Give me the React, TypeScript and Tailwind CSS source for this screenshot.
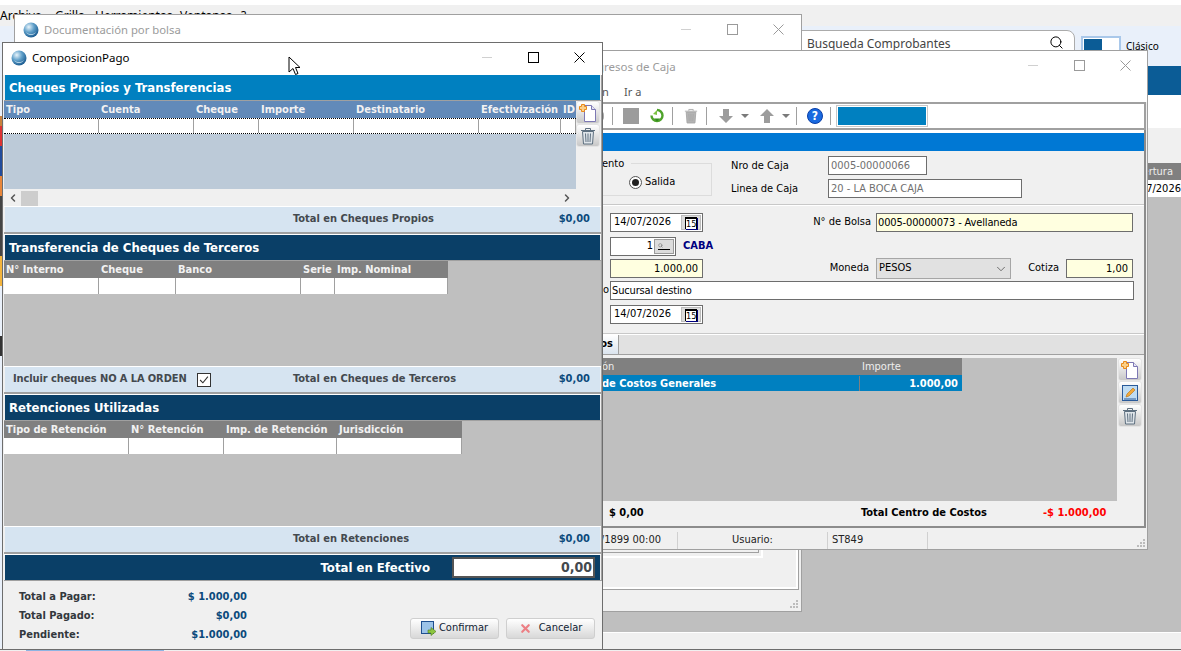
import { Search, ChevronDown, X, ChevronLeft, ChevronRight } from 'lucide-react';

type Col = { label: string; width: number };

const chequesCols: Col[] = [
  { label: 'Tipo', width: 95 },
  { label: 'Cuenta', width: 95 },
  { label: 'Cheque', width: 65 },
  { label: 'Importe', width: 95 },
  { label: 'Destinatario', width: 125 },
  { label: 'Efectivización', width: 82 },
  { label: 'ID', width: 15 },
];

const terceroCols: Col[] = [
  { label: 'N° Interno', width: 95 },
  { label: 'Cheque', width: 77 },
  { label: 'Banco', width: 125 },
  { label: 'Serie', width: 34 },
  { label: 'Imp. Nominal', width: 113 },
];

const retencionCols: Col[] = [
  { label: 'Tipo de Retención', width: 125 },
  { label: 'N° Retención', width: 95 },
  { label: 'Imp. de Retención', width: 113 },
  { label: 'Jurisdicción', width: 125 },
];

function Globe({ id }: { id: string }) {
  return (
    <svg width="16" height="16" viewBox="0 0 16 16" className="shrink-0">
      <defs>
        <radialGradient id={id} cx="0.35" cy="0.3" r="0.8">
          <stop offset="0" stopColor="#e8f4fb" />
          <stop offset="0.45" stopColor="#5f9fc9" />
          <stop offset="1" stopColor="#0f4f86" />
        </radialGradient>
      </defs>
      <circle cx="8" cy="8" r="7.5" fill={`url(#${id})`} />
      <path d="M3 10c3 3 7 3 10 0-2 4-8 4-10 0z" fill="#cfe6f3" />
    </svg>
  );
}

function WinButtons({ faint }: { faint?: boolean }) {
  const stroke = faint ? '#9a9a9a' : '#000000';
  return (
    <div className="flex items-center">
      <div className="flex w-[46px] justify-center">
        <div className="h-px w-[10px] bg-[#d0d0d0]" />
      </div>
      <div className="flex w-[46px] justify-center">
        <svg width="11" height="11" viewBox="0 0 11 11">
          <rect x="0.5" y="0.5" width="10" height="10" fill="none" stroke={stroke} />
        </svg>
      </div>
      <div className="flex w-[46px] justify-center">
        <svg width="11" height="11" viewBox="0 0 11 11">
          <path d="M0.5 0.5l10 10M10.5 0.5l-10 10" stroke={stroke} fill="none" />
        </svg>
      </div>
    </div>
  );
}

function NewDocIcon() {
  return (
    <svg width="20" height="20" viewBox="0 0 20 20">
      <path d="M6.500 2.500h7l4 4v12h-11z" fill="#fff" stroke="#7d78b4" />
      <path d="M13.500 2.500v4h4" fill="#e6e6f4" stroke="#7d78b4" />
      <path d="M3.500 1.500h3v2h2v3h-2v2h-3v-2h-2v-3h2z" fill="#fbd08a" stroke="#ea8a1a" />
    </svg>
  );
}

function TrashIcon({ color = '#5d6f7f', width = 16 }: { color?: string; width?: number }) {
  return (
    <svg width={width} height="18" viewBox="0 0 16 18">
      <path d="M2.500 4.500h11l-1 12.500h-9z" fill={color === '#5d6f7f' ? '#dfe5ea' : '#b4b4b4'} stroke={color} />
      <path d="M1 3.500h14M5.500 3V1.500h5V3" fill="none" stroke={color} />
      <path d="M5.500 6.500l.5 8.500M8 6.500v8.500M10.500 6.500l-.5 8.500" stroke={color} />
    </svg>
  );
}

function EditIcon() {
  return (
    <svg width="16" height="16" viewBox="0 0 16 16">
      <rect x="0.500" y="0.500" width="15" height="15" fill="#bfdcf3" stroke="#2a5a9a" />
      <path d="M4 12l1-3 6-6 2 2-6 6z" fill="#f2a93b" stroke="#b86e10" strokeWidth="0.6" />
      <path d="M2 14h12" stroke="#2a5a9a" />
    </svg>
  );
}

function ToolButton({ children }: { children: React.ReactNode }) {
  return (
    <div className="flex h-[23px] w-[24px] items-center justify-center rounded-[3px] border border-[#e4e4e4] bg-linear-to-b from-white to-[#c8c8c8]">
      {children}
    </div>
  );
}

function GridTable({ cols, headerBg, rowClass, dotted }: { cols: Col[]; headerBg: string; rowClass?: string; dotted?: boolean }) {
  return (
    <div className="flex flex-col">
      <div className={`flex h-[17px] items-start pt-px ${headerBg}`}>
        {cols.map((c) => (
          <div key={c.label} style={{ width: c.width }} className="overflow-hidden whitespace-nowrap pl-[2px] font-bold leading-[16px] text-[#f2f2f2]">
            {c.label}
          </div>
        ))}
      </div>
      <div className={`flex h-[16px] bg-white ${dotted ? 'border-y border-dotted border-black' : ''} ${rowClass ?? ''}`}>
        {cols.map((c) => (
          <div key={c.label} style={{ width: c.width }} className="border-r border-[#a0a0a0]" />
        ))}
      </div>
    </div>
  );
}

function SectionBar({ title, color }: { title: string; color: string }) {
  return <div className={`mx-px flex h-[25px] items-center pl-1 text-[13px] font-bold text-white ${color}`}>{title}</div>;
}

function TotalRow({ label, value, left }: { label: string; value: string; left?: React.ReactNode }) {
  return (
    <div className="mx-px flex h-[25px] items-center bg-[#d6e4f1] font-bold text-[#44494e]">
      <div className="flex w-[288px] items-center pl-2">{left}</div>
      <span className="whitespace-nowrap">{label}</span>
      <span className="ml-auto pr-[10px] text-[#0c4a7c]">{value}</span>
    </div>
  );
}

function CalendarButton() {
  return (
    <div className="ml-auto mr-[1px] flex h-[15px] w-[20px] items-center justify-center border border-[#bcbcbc] bg-[#dcdcdc]">
      <div className="h-[12px] w-[12px] border-t-2 border-r border-l border-black bg-white text-center text-[9px] leading-[10px] text-black shadow-[1px_1px_0_#000080]">15</div>
    </div>
  );
}

function DateField() {
  return (
    <div className="flex h-[19px] w-[93px] items-center border border-[#6d6d6d] bg-white pl-[3px]">
      14/07/2026
      <CalendarButton />
    </div>
  );
}

function Sep({ className = 'mx-[8px]' }: { className?: string }) {
  return <div className={`h-[18px] w-px bg-[#a0a0a0] ${className}`} />;
}

function Grip() {
  return (
    <svg width="9" height="9" viewBox="0 0 9 9" className="shrink-0">
      <path d="M6 0h2v2H6zM3 3h2v2H3zM6 3h2v2H6zM0 6h2v2H0zM3 6h2v2H3zM6 6h2v2H6z" fill="#bcbcbc" />
    </svg>
  );
}

function Backdrop() {
  return (
    <div className="flex h-[651px] flex-col">
      <div className="h-[5px] bg-white" />
      <div className="flex h-[21px] items-center bg-[#f0f0f0] font-['Noto_Sans'] text-[12px] leading-[14px] [font-stretch:normal] text-black">
        <span className="w-[55px]">Archivo</span>
        <span className="w-[40px]">Grilla</span>
        <span className="w-[85px]">Herramientas</span>
        <span className="w-[61px]">Ventanas</span>
        <span>?</span>
      </div>
      <div className="flex h-[40px] items-start bg-[#e9f0fa] pl-[801px]">
        <div className="mt-[4px] flex h-[30px] w-[274px] items-start rounded-tr-lg border border-[#ababab] bg-white pl-[5px] pt-[4px] font-['Noto_Sans'] text-[12px] [font-stretch:normal] text-[#444]">
          <span>Busqueda Comprobantes</span>
          <Search size={15} className="ml-auto mr-[10px] text-black" strokeWidth={1.6} />
        </div>
        <div className="ml-[6px] mt-[10px] flex h-[24px] w-[40px] border-2 border-[#a9c8ea] bg-white p-px">
          <div className="h-full w-[18px] bg-[#0b5c96]" />
        </div>
        <span className="ml-[5px] mt-[13px] font-['Noto_Sans'] text-[10px] [font-stretch:normal]">Clásico</span>
      </div>
      <div className="h-[29px] bg-[#0b5c96]" />
      <div className="h-[33px] bg-white" />
      <div className="h-[35px] bg-[#f0f0f0]" />
      <div className="h-[17px] bg-[#808080] pr-[8px] text-right leading-[17px] text-[#eee]">Apertura</div>
      <div className="h-[17px] bg-white text-right leading-[17px]">14/07/2026</div>
      <div className="h-[435px] bg-[#bfbfbf]" />
      <div className="h-px bg-white" />
      <div className="h-[16px] bg-[#f0f0f0]" />
      <div className="h-px bg-[#6d6d6d]" />
      <div className="flex h-[1px] pl-[26px]">
        <div className="w-[138px] bg-[#8db4e2]" />
      </div>
    </div>
  );
}

function DocumentacionWindow() {
  return (
    <div className="absolute left-[14px] top-[14px] flex h-[598px] w-[788px] flex-col border border-[#a0a0a0] bg-white">
      <div className="flex h-[30px] shrink-0 items-center pl-[8px]">
        <Globe id="globe-doc" />
        <span className="ml-[5px] font-['Noto_Sans'] text-[11.3px] leading-[14px] [font-stretch:normal] text-[#9b9b9b]">Documentación por bolsa</span>
        <div className="ml-auto -mt-[1px]">
          <WinButtons faint />
        </div>
      </div>
      <div className="h-[6px] shrink-0" />
      <div className="relative flex-1 bg-[#f0f0f0] pb-[22px] pr-[3px]">
        <div className="h-full border-b-2 border-r-2 border-white shadow-[1px_1px_0_#a0a0a0]">
          <div className="h-[507px] w-[748px] border-b-2 border-r-2 border-white">
            <div className="h-[502px] w-[744px] border-b border-r border-[#a0a0a0]" />
          </div>
        </div>
        <div className="absolute bottom-[2px] right-[2px]">
          <Grip />
        </div>
      </div>
    </div>
  );
}

function Toolbar() {
  return (
    <div className="mx-px flex h-[28px] items-center border-2 border-double border-[#a0a0a0] bg-white pl-[76px]">
      <div className="h-[10px] w-[4px] rounded-r-full bg-[#a8a8a8]" />
      <Sep />
      <div className="ml-[2px] h-[16px] w-[16px] bg-[#9c9c9c]" />
      <div className="ml-[11px]">
        <svg width="14" height="16" viewBox="0 0 14 16">
          <path d="M7 2a5.500 5.500 0 1 1-5.500 5.500" fill="none" stroke="#4fa32b" strokeWidth="2.400" />
          <path d="M7 13.500l-3-3h6z" fill="#2f8a1c" />
          <path d="M3 6l4-4v5z" fill="#7cc242" />
        </svg>
      </div>
      <Sep />
      <div className="ml-[3px]">
        <TrashIcon color="#a6a6a6" width={14} />
      </div>
      <Sep />
      <svg width="14" height="14" viewBox="0 0 14 14" className="ml-[4px]">
        <path d="M4 0h6v7h4l-7 7-7-7h4z" fill="#9c9c9c" />
      </svg>
      <div className="ml-[8px] h-0 w-0 border-x-4 border-t-4 border-x-transparent border-t-[#7a7a7a]" />
      <svg width="14" height="14" viewBox="0 0 14 14" className="ml-[11px]">
        <path d="M4 14h6V7h4L7 0 0 7h4z" fill="#9c9c9c" />
      </svg>
      <div className="ml-[8px] h-0 w-0 border-x-4 border-t-4 border-x-transparent border-t-[#7a7a7a]" />
      <Sep className="ml-[6px] mr-[8px]" />
      <div className="ml-[2px] flex h-[16px] w-[16px] items-center justify-center rounded-full border border-[#0a3fa8] bg-[#1a6ae0] text-[12px] font-bold text-white">?</div>
      <Sep className="ml-[7px] mr-[6px]" />
      <div className="h-[20px] w-[90px] border border-white bg-[#0080c0] shadow-[0_0_0_1px_#c8c8c8]" />
    </div>
  );
}

function IngresosWindow() {
  return (
    <div className="absolute left-[520px] top-[50px] flex h-[500px] w-[628px] flex-col border border-[#a0a0a0] bg-[#f0f0f0] text-[11px]">
      <div className="flex h-[31px] items-center bg-white pl-[76px]">
        <span className="font-['Noto_Sans'] text-[11.5px] [font-stretch:normal] text-[#9b9b9b]">gresos de Caja</span>
        <div className="ml-auto -mr-px -mt-[3px]">
          <WinButtons faint />
        </div>
      </div>
      <div className="flex h-[20px] items-center bg-white pl-[81px] font-['Noto_Sans'] text-[11px] [font-stretch:normal] text-[#555]">
        <span className="w-[22px]">n</span>
        <span>Ir a</span>
      </div>
      <Toolbar />
      <div className="mr-px flex h-[398px] flex-col border-b-2 border-r-2 border-[#8c8c8c]">
        <div className="h-[3px] bg-white" />
        <div className="h-[18px] bg-[#0078d4]" />
        <div className="flex h-[53px] items-start pl-[81px]">
          <div className="relative mt-[12px] h-[33px] w-[110px] border border-l-0 border-[#dcdcdc]">
            <span className="absolute left-0 top-[-8px] bg-[#f0f0f0] pr-[7px]">ento</span>
            <div className="flex h-full items-center pl-[27px] pt-[5px]">
              <div className="flex h-[13px] w-[13px] items-center justify-center rounded-full border border-[#555] bg-white">
                <div className="h-[7px] w-[7px] rounded-full bg-[#222]" />
              </div>
              <span className="ml-[3px]">Salida</span>
            </div>
          </div>
          <div className="ml-[19px] flex flex-col gap-[4px] pt-[5px]">
            <div className="flex h-[19px] items-center">
              <span className="w-[97px] pt-[2px]">Nro de Caja</span>
              <div className="h-[19px] w-[99px] border border-[#6d6d6d] bg-white pl-[2px] leading-[17px] text-[#707070]">0005-00000066</div>
            </div>
            <div className="flex h-[19px] items-center">
              <span className="w-[97px] pt-[2px]">Linea de Caja</span>
              <div className="h-[19px] w-[194px] border border-[#6d6d6d] bg-white pl-[2px] leading-[17px] text-[#707070]">20 - LA BOCA CAJA</div>
            </div>
          </div>
        </div>
        <div className="h-[2px] border-t border-[#c8c8c8] bg-white" />
        <div className="flex flex-col pl-[89px]">
          <div className="mt-[7px] flex h-[19px] items-center">
            <DateField />
            <span className="w-[173px] pr-[5px] text-right">N° de Bolsa</span>
            <div className="h-[19px] w-[257px] border border-[#6d6d6d] bg-[#ffffe0] pl-[1px] leading-[17px] tracking-[-0.15px]">0005-00000073 - Avellaneda</div>
          </div>
          <div className="mt-[5px] flex h-[18px] items-center">
            <div className="flex h-[19px] w-[66px] items-center justify-end border border-[#6d6d6d] bg-white pr-[1px]">
              1
              <div className="ml-px flex h-[15px] w-[20px] items-center justify-center border border-[#9a9a9a] bg-[#dcdcdc]">
                <div className="h-[7px] w-[12px] border-b border-black">
                  <Search size={5} className="text-[#555]" />
                </div>
              </div>
            </div>
            <span className="ml-[7px] font-bold text-[#000080]">CABA</span>
          </div>
          <div className="mt-[4px] flex h-[19px] items-center">
            <div className="h-[19px] w-[93px] border border-[#6d6d6d] bg-[#ffffe0] pr-[4px] text-right leading-[17px]">1.000,00</div>
            <span className="w-[173px] pr-[7px] text-right">Moneda</span>
            <div className="flex h-[21px] w-[135px] items-center justify-between border border-[#a6a6a6] bg-[#e1e1e1] pl-[2px] pr-[2px]">
              PESOS
              <ChevronDown size={14} className="text-[#555]" strokeWidth={1.4} />
            </div>
            <span className="w-[55px] pr-[7px] text-right">Cotiza</span>
            <div className="h-[19px] w-[67px] border border-[#6d6d6d] bg-[#ffffe0] pr-[4px] text-right leading-[17px]">1,00</div>
          </div>
          <div className="mt-[3px] flex h-[19px] items-center">
            <span className="-ml-[7px] w-[7px]">o</span>
            <div className="h-[19px] w-[524px] border border-[#6d6d6d] bg-white pl-[1px] leading-[17px] tracking-[-0.15px]">Sucursal destino</div>
          </div>
          <div className="mt-[5px]">
            <DateField />
          </div>
        </div>
        <div className="mt-[9px] h-[2px] border-t border-[#c8c8c8] bg-white" />
        <div className="flex h-[20px] border-b border-[#a0a0a0] bg-[#e1e1e1]">
          <div className="flex w-[98px] items-center justify-end border-r border-[#a0a0a0] bg-linear-to-b from-white to-[#dbe4ee] pr-[5px] font-bold">os</div>
        </div>
        <div className="flex h-[146px] bg-[#f0f0f0] pt-[3px]">
          <div className="flex w-[596px] flex-col bg-[#bfbfbf]">
            <div className="flex h-[17px] w-[441px] items-center bg-[#808080] pt-px leading-[16px] text-[#eee]">
              <span className="w-[341px] pl-[81px]">ón</span>
              <span>Importe</span>
            </div>
            <div className="flex h-[16px] w-[441px] bg-[#0080c0] pt-px font-bold text-white">
              <span className="w-[339px] border-r border-[#808080] pl-[81px] leading-[15px]">de Costos Generales</span>
              <span className="flex-1 pr-[4px] text-right leading-[15px]">1.000,00</span>
            </div>
          </div>
          <div className="ml-[1px] flex flex-col">
            <ToolButton><NewDocIcon /></ToolButton>
            <ToolButton><EditIcon /></ToolButton>
            <ToolButton><TrashIcon /></ToolButton>
          </div>
        </div>
        <div className="flex flex-1 items-center pl-[88px] font-bold text-black">
          <span className="w-[252px]">$ 0,00</span>
          <span className="w-[182px]">Total Centro de Costos</span>
          <span className="text-[#ff0000]">-$ 1.000,00</span>
        </div>
      </div>
      <div className="flex flex-1 items-center pt-[4px] text-[#222]">
        <span className="w-[157px] border-r border-[#d0d0d0] pr-[16px] text-right">/1899 00:00</span>
        <span className="w-[150px] border-r border-[#d0d0d0] pl-[54px]">Usuario:</span>
        <span className="w-[100px] border-r border-[#d0d0d0] pl-[4px]">ST849</span>
        <div className="ml-auto self-end pb-[1px] pr-[1px]">
          <Grip />
        </div>
      </div>
    </div>
  );
}

function ComposicionWindow() {
  return (
    <div className="absolute left-[2px] top-[42px] flex h-[608px] w-[601px] flex-col border border-[#6d6d6d] bg-[#f0f0f0] text-[11px]">
      <div className="flex h-[30px] shrink-0 items-center bg-white pl-[8px]">
        <Globe id="globe-comp" />
        <span className="ml-[5px] font-['Noto_Sans'] text-[11.5px] [font-stretch:normal] text-black">ComposicionPago</span>
        <div className="ml-auto -mt-[1px]">
          <WinButtons />
        </div>
      </div>
      <div className="h-[2px] shrink-0 bg-white" />

      <div className="flex flex-col border-r border-[#a0a0a0] pl-px">
        <SectionBar title="Cheques Propios y Transferencias" color="bg-[#0080c0]" />
        <div className="h-px bg-[#a0a0a0]" />
        <div className="flex h-[105px]">
          <div className="relative flex w-[572px] flex-col">
            <GridTable cols={chequesCols} headerBg="bg-[#628ab9]" dotted />
            <div className="h-[55px] bg-[#bccad8]" />
            <div className="mt-px flex h-[16px] items-center justify-between bg-[#f0f0f0]">
              <ChevronLeft size={12} strokeWidth={3} className="ml-[3px] text-[#555]" />
              <div className="absolute left-[17px] h-[15px] w-[17px] bg-[#cdcdcd]" />
              <ChevronRight size={12} strokeWidth={3} className="mr-[3px] text-[#555]" />
            </div>
          </div>
          <div className="flex flex-col">
            <ToolButton><NewDocIcon /></ToolButton>
            <ToolButton><TrashIcon /></ToolButton>
          </div>
        </div>
        <div className="h-px bg-white" />
        <TotalRow label="Total en Cheques Propios" value="$0,00" />
        <div className="h-[2px] bg-[#a0a0a0]" />
        <div className="h-px bg-white" />

        <SectionBar title="Transferencia de Cheques de Terceros" color="bg-[#0a3f67]" />
        <div className="h-px bg-[#a0a0a0]" />
        <div className="flex h-[105px] flex-col bg-[#bfbfbf]">
          <GridTable cols={terceroCols} headerBg="bg-[#808080] w-[444px]" rowClass="w-[444px]" />
        </div>
        <div className="h-px bg-white" />
        <TotalRow
          label="Total en Cheques de Terceros"
          value="$0,00"
          left={
            <>
              <span className="whitespace-nowrap tracking-[-0.1px]">Incluir cheques NO A LA ORDEN</span>
              <div className="ml-[10px] flex h-[14px] w-[14px] shrink-0 items-center justify-center border border-[#333] bg-white">
                <svg width="10" height="10" viewBox="0 0 9 9">
                  <path d="M1 4.500l2.500 2.500L8 1.500" fill="none" stroke="#333" strokeWidth="1" />
                </svg>
              </div>
            </>
          }
        />
        <div className="h-[2px] bg-[#a0a0a0]" />
        <div className="h-px bg-white" />

        <SectionBar title="Retenciones Utilizadas" color="bg-[#0a3f67]" />
        <div className="h-px bg-[#a0a0a0]" />
        <div className="flex h-[105px] flex-col bg-[#bfbfbf]">
          <GridTable cols={retencionCols} headerBg="bg-[#808080] w-[458px]" rowClass="w-[458px]" />
        </div>
        <div className="h-px bg-white" />
        <TotalRow label="Total en Retenciones" value="$0,00" />
        <div className="h-[2px] bg-[#a0a0a0]" />
        <div className="h-px bg-white" />

        <div className="mx-px flex h-[25px] items-center justify-end bg-[#0a3f67] pr-[5px] text-[13px] font-bold text-white">
          <span>Total en Efectivo</span>
          <div className="ml-[22px] h-[21px] w-[143px] border-2 border-[#555] bg-white pr-px text-right text-[14px] leading-[17px] text-[#44494e]">0,00</div>
        </div>
        <div className="h-px bg-[#a0a0a0]" />
      </div>

      <div className="flex flex-1 pl-[16px]">
        <div className="mt-[8px] flex w-[228px] flex-col gap-[3px] font-bold text-[#33383d]">
          {[
            ['Total a Pagar:', '$ 1.000,00'],
            ['Total Pagado:', '$0,00'],
            ['Pendiente:', '$1.000,00'],
          ].map(([label, value]) => (
            <div key={label} className="flex h-[16px] items-center justify-between">
              <span>{label}</span>
              <span className="text-[#0c4a7c]">{value}</span>
            </div>
          ))}
        </div>
        <div className="ml-auto mr-[7px] mt-[37px] flex gap-[7px]">
          <div className="flex h-[21px] w-[89px] items-center justify-center gap-[2px] rounded-[3px] border border-[#cfcfcf] bg-linear-to-b from-white to-[#d8d8d8] text-[#123]">
            <svg width="16" height="16" viewBox="0 0 16 16">
              <rect x="0.500" y="0.500" width="12" height="12" fill="#9cc3e8" stroke="#1f4f8f" />
              <path d="M7 9h3V6.500l5 4-5 4V12H7z" fill="#8cc63f" stroke="#4d7a1a" strokeWidth="0.600" />
            </svg>
            Confirmar
          </div>
          <div className="flex h-[21px] w-[89px] items-center justify-center gap-[7px] rounded-[3px] border border-[#cfcfcf] bg-linear-to-b from-white to-[#d8d8d8] text-[#123]">
            <X size={13} strokeWidth={4} className="text-[#ec7f84]" />
            Cancelar
          </div>
        </div>
      </div>
    </div>
  );
}

export default function App() {
  return (
    <div className="relative h-[651px] w-[1181px] overflow-hidden bg-[#f0f0f0] font-['DejaVu_Sans',sans-serif] text-[11px] [font-stretch:condensed] text-black">
      <Backdrop />
      <div className="absolute left-0 top-[26px] flex h-[622px] w-[2px] flex-col bg-[#e9f0fa]">
        <div className="h-[90px]" />
        <div className="h-[10px] bg-[#c8813c]" />
        <div className="h-[20px] bg-[#d33]" />
        <div className="h-[30px] bg-[#224c9c]" />
        <div className="h-[20px] bg-[#e8863a]" />
        <div className="h-[60px] bg-[#444]" />
        <div className="h-[30px] bg-[#f3b43c]" />
        <div className="h-[50px]" />
        <div className="h-[20px] bg-[#333]" />
      </div>
      <DocumentacionWindow />
      <IngresosWindow />
      <ComposicionWindow />
      <svg width="14" height="20" viewBox="0 0 14 20" className="absolute left-[288px] top-[56px]">
        <path d="M1 1v15l4-3.500 2.500 6 2.500-1-2.500-6H12z" fill="#fff" stroke="#000" />
      </svg>
    </div>
  );
}
